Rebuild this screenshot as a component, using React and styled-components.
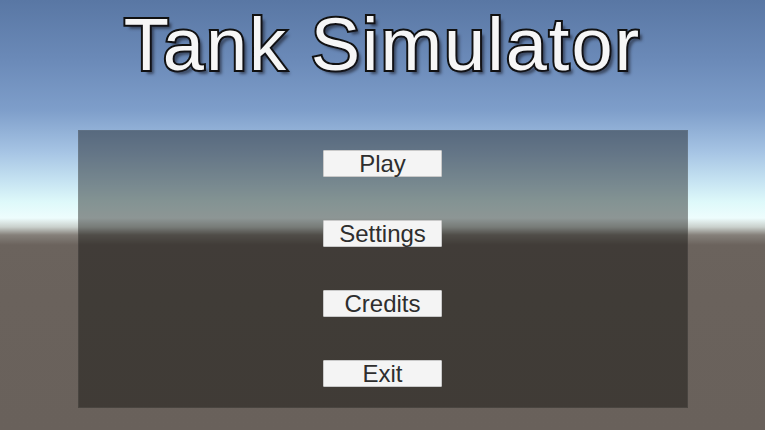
import React from 'react'
import styled, { createGlobalStyle } from 'styled-components'

const GlobalStyle = createGlobalStyle`
  html, body {
    margin: 0;
    padding: 0;
  }
  body {
    width: 765px;
    height: 430px;
    overflow: hidden;
    font-family: "Liberation Sans", Arial, sans-serif;
  }
`

const Scene = styled.div`
  width: 765px;
  height: 430px;
  display: flex;
  flex-direction: column;
  align-items: center;
  background: linear-gradient(
    to bottom,
    #5977a4 0px,
    #6b8ab8 60px,
    #7e9eca 110px,
    #a6c4e4 152px,
    #c9e6f3 184px,
    #def9fa 202px,
    #eefdfd 218px,
    #c9d0cc 227px,
    #85807a 235px,
    #6b635d 245px,
    #6a625c 300px,
    #69615b 430px
  );
`

const Title = styled.h1`
  margin: 5px 0 0;
  font-family: "Liberation Sans", Arial, sans-serif;
  font-weight: normal;
  font-size: 74px;
  line-height: 80px;
  letter-spacing: 2px;
  color: #f6f6f6;
  -webkit-text-stroke: 4px #111;
  paint-order: stroke fill;
  text-shadow: 4px 4px 3px rgba(20, 20, 30, 0.55);
`

const Panel = styled.div`
  margin-top: 45px;
  width: 610px;
  height: 278px;
  box-sizing: border-box;
  padding: 20px 0 21px;
  display: flex;
  flex-direction: column;
  align-items: center;
  gap: 43px;
  background: rgba(8, 6, 4, 0.42);
  box-shadow: inset 0 0 0 1px rgba(255, 255, 255, 0.05);
`

const MenuButton = styled.button`
  width: 119px;
  height: 27px;
  margin: 0;
  padding: 0;
  border: 1px solid #c9c9c9;
  border-radius: 1px;
  background: #f4f4f4;
  color: #2e2e2e;
  font-family: "Liberation Sans", Arial, sans-serif;
  font-size: 24px;
  line-height: 25px;
  text-align: center;
  cursor: pointer;
`

const items = ['Play', 'Settings', 'Credits', 'Exit']

export default function App() {
  return (
    <>
      <GlobalStyle />
      <Scene>
        <Title>Tank Simulator</Title>
        <Panel>
          {items.map((label) => (
            <MenuButton key={label}>{label}</MenuButton>
          ))}
        </Panel>
      </Scene>
    </>
  )
}
